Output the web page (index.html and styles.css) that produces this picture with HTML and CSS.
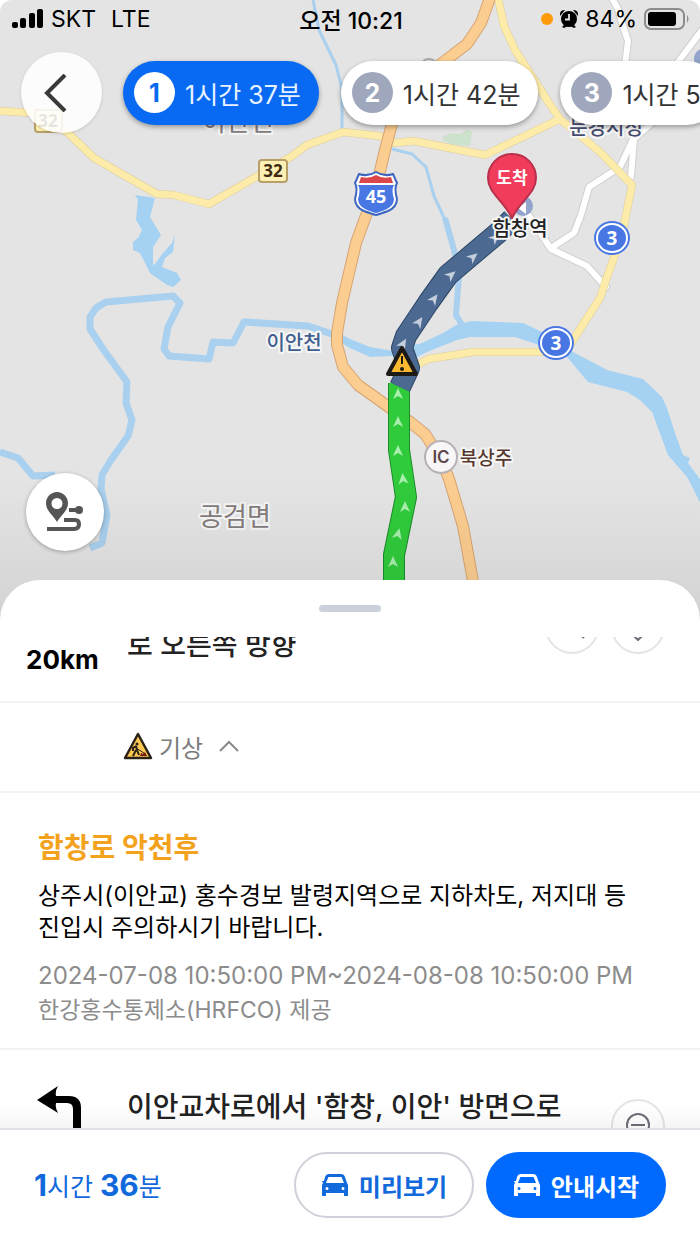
FILE: index.html
```html
<!DOCTYPE html>
<html lang="ko">
<head>
<meta charset="utf-8">
<meta name="viewport" content="width=device-width, initial-scale=1">
<title>길찾기</title>
<link rel="stylesheet" href="styles.css">
</head>
<body>
<div class="app">
  <section class="map">
    <svg class="map-canvas" viewBox="0 0 700 625" preserveAspectRatio="xMidYMin slice" role="img" aria-label="경로 지도">
      <defs>
        <path id="heading" d="M0-6 5 5 0 2-5 5Z"/>
        <linearGradient id="shade" x1="0" y1="0" x2="0" y2="1">
          <stop offset="0" stop-color="#000" stop-opacity="0"/>
          <stop offset="1" stop-color="#000" stop-opacity=".08"/>
        </linearGradient>
      </defs>

      <!-- park and water -->
      <path class="park" d="m443 136 9-3 8 1 8-5 4 3-2 14-15-1-12-4Z"/>
      <g class="water">
        <path d="M135 195 155 198 150 217 161 235 153 247 153 265 155 264 163 253 172 243 175 235 173 252 165 258 162 267 177 273 181 280 173 287 167 285 150 273 140 253 133 250 133 242 138 238 142 230 136 220 138 200Z"/>
        <path d="M335 331 350 339 370 347 393 351 422 343 443 333 458 324 472 321 523 323 540 331 573 352 607 370 643 379 662 397 667 408 675 433 683 455 690 458 688 463 702 482 702 506 687 477 668 455 652 412 640 400 627 392 588 382 567 357 545 347 515 337 470 337 457 340 427 352 417 357 392 356 370 357 350 348 335 339Z"/>
      </g>
      <g class="stream">
        <path class="w3" d="m313 0 6 30 17 35 6 24v45M392 149l20 5 14 13 8 29 12 26"/>
        <path class="w5" d="m445 218 9 32 5 25-3 40 8 13"/>
        <path class="w6" d="m0 452 18 6 15 18 22-1M90 548l12-5 5-28-6-26 1-14 9-15 17-24 4-16-6-17 1-21-24-33-13-20 0-12 6-9 10-6 67-6 7 7-12 24-4 22 5 7 40 3 4-17 20 1 11-21 64 4 24 8 8 4"/>
      </g>

      <!-- roads -->
      <path class="minor-case" d="m613 0 5 9 5 17 5 15-3 24M702 30l-24 32M653 122l-19 17-3 38M634 137l-14 30-31 20-8 28-7 18-23 15M527 213l24 36 36 17 19 21"/>
      <path class="minor" d="m613 0 5 9 5 17 5 15-3 24M702 30l-24 32M653 122l-19 17-3 38M634 137l-14 30-31 20-8 28-7 18-23 15M527 213l24 36 36 17 19 21"/>
      <path class="main-case" d="m0 111 35 2 32 19 27 26 63 36 17 1 35 9 80-46 18-13 36-13 37 4 12 7 22-2 71 14 75-36 40 33 32 33-6 30-4 20-15 42-7 21-34 53M498-2l6 28 11 24 34 53 11 16M556 352l-83 0-45 7-22 12"/>
      <path class="main" d="m0 111 35 2 32 19 27 26 63 36 17 1 35 9 80-46 18-13 36-13 37 4 12 7 22-2 71 14 75-36 40 33 32 33-6 30-4 20-15 42-7 21-34 53M498-2l6 28 11 24 34 53 11 16M556 352l-83 0-45 7-22 12"/>
      <path class="express-case" d="m490-2-9 25-14 21-43 33-27 28-12 45-9 38-20 55-14 60-5 30 0 12 6 22 15 18 35 25 17 12 15 12 16 25 8 20 14 47 17 94"/>
      <path class="express" d="m490-2-9 25-14 21-43 33-27 28-12 45-9 38-20 55-14 60-5 30 0 12 6 22 15 18 35 25 17 12 15 12 16 25 8 20 14 47 17 94"/>

      <!-- place names under the route -->
      <circle class="spot" cx="523" cy="206" r="10"/>
      <path class="spot-mark" d="m518 208 8-6v12Z"/>
      <circle class="spot" cx="705" cy="59" r="11"/>
      <circle class="spot-ring" cx="429" cy="68" r="9"/>
      <text class="label town" x="238" y="131">이안면</text>
      <text class="label town" x="235" y="526">공검면</text>
      <text class="label river" x="294" y="350">이안천</text>
      <text class="label office" x="606" y="135">문경시청</text>

      <!-- road numbers -->
      <g class="local-road">
        <rect x="35" y="110" width="27" height="22" rx="3"/><text x="48" y="127">32</text>
        <rect x="259" y="160" width="28" height="22" rx="3"/><text x="273" y="177">32</text>
      </g>
      <g class="national-road">
        <ellipse cx="612" cy="238" rx="18" ry="17"/><ellipse class="ring" cx="612" cy="238" rx="15" ry="14"/><text x="612" y="245">3</text>
        <ellipse cx="556" cy="343" rx="18" ry="17"/><ellipse class="ring" cx="556" cy="343" rx="15" ry="14"/><text x="556" y="350">3</text>
      </g>
      <g class="shield">
        <path class="shield-edge" d="M359 174q9 3 17-2 8 5 17 2l4 9q-3 5 0 16 0 8-9 12-8 3-12 4-4-1-12-4-9-4-9-12 3-11 0-16Z"/>
        <path class="shield-top" d="M361 177q9 2 15-2 6 4 15 2l2 6h-34Z"/>
        <path class="shield-body" d="M358 185h36q-3 5 0 14 0 6-7 10-7 3-11 4-4-1-11-4-7-4-7-10 3-9 0-14Z"/>
        <text x="376" y="203">45</text>
      </g>
      <circle class="ic" cx="441" cy="457" r="16"/>
      <text class="ic-text" x="441" y="463">IC</text>
      <text class="label gate" x="486" y="465">북상주</text>

      <!-- route -->
      <path class="route clear-case" d="M399 383v67l7 47-12 58v75"/>
      <path class="route clear" d="M399 383v67l7 47-12 58v75"/>
      <path class="route slow-case" d="m512 219-13 13-51 43-20 28-22 33-4 12 7 20-9 19"/>
      <path class="route slow" d="m512 219-13 13-51 43-20 28-22 33-4 12 7 20-9 19"/>
      <g class="arrows-clear">
        <use href="#heading" x="398" y="394"/><use href="#heading" x="398" y="422"/><use href="#heading" x="398" y="451"/>
        <use href="#heading" transform="translate(403 479) rotate(-6)"/><use href="#heading" x="405" y="507"/>
        <use href="#heading" transform="translate(398 534) rotate(14)"/><use href="#heading" x="393" y="562"/>
      </g>
      <g class="arrows-slow">
        <use href="#heading" transform="translate(495 238) rotate(48)"/><use href="#heading" transform="translate(473 257) rotate(50)"/>
        <use href="#heading" transform="translate(451 275) rotate(50)"/><use href="#heading" transform="translate(434 299) rotate(36)"/>
        <use href="#heading" transform="translate(419 322) rotate(34)"/><use href="#heading" transform="translate(403 344) rotate(30)"/>
      </g>
      <g class="hazard">
        <path class="hazard-edge" d="m402 348 14 26h-28Z"/>
        <path d="M402 356v8"/><circle cx="402" cy="369" r="1"/>
      </g>
      <path class="pin" d="M512 154c-14 0-24 11-24 24 0 15 15 22 24 40 9-18 24-25 24-40 0-13-10-24-24-24Z"/>
      <text class="pin-text" x="512" y="184">도착</text>
      <text class="label station" x="520" y="236">함창역</text>
      <rect x="0" y="480" width="700" height="145" fill="url(#shade)"/>
    </svg>

    <header class="status">
      <div class="status-side">
        <svg width="32" height="20" viewBox="0 0 32 20" aria-hidden="true"><rect x="0" y="13" width="6" height="6" rx="2"/><rect x="8" y="9" width="6" height="10" rx="2"/><rect x="17" y="4" width="6" height="15" rx="2"/><rect x="25" y="0" width="6" height="19" rx="2"/></svg>
        <span>SKT</span><span class="network">LTE</span>
      </div>
      <time class="clock">오전 10:21</time>
      <div class="status-side status-end">
        <svg width="12" height="12" viewBox="0 0 12 12" aria-hidden="true"><circle cx="6" cy="6" r="6" fill="#ff9a0a"/></svg>
        <svg width="18" height="20" viewBox="0 0 18 20" aria-hidden="true"><circle cx="9" cy="10" r="8"/><path d="M0 5q0-4 5-4L0 7ZM18 5q0-4-5-4l5 6ZM2 18l3-3 3 2-4 2ZM16 18l-3-3-3 2 4 2Z"/><path d="M9 5v5.500H5" fill="none" stroke="#e4e4e4" stroke-width="1.800"/></svg>
        <span>84%</span>
        <svg width="46" height="22" viewBox="0 0 46 22" aria-hidden="true"><rect x="1" y="1" width="39" height="20" rx="6" fill="none" stroke="#8c8c8c" stroke-width="2"/><rect x="4" y="4" width="28" height="14" rx="3"/><path d="M43 7q3 4 0 8Z" fill="#8c8c8c"/></svg>
      </div>
    </header>

    <nav class="routes">
      <button class="back" type="button" aria-label="뒤로">
        <svg width="24" height="38" viewBox="0 0 24 38" aria-hidden="true"><path d="M21 1 3 19l18 18" fill="none" stroke="#3a3a3a" stroke-width="4"/></svg>
      </button>
      <div class="chips">
        <button class="chip chip-on" type="button"><span class="chip-no">1</span>1시간 37분</button>
        <button class="chip" type="button"><span class="chip-no">2</span>1시간 42분</button>
        <button class="chip" type="button"><span class="chip-no">3</span>1시간 5</button>
      </div>
    </nav>

    <button class="overview" type="button" aria-label="전체 경로">
      <svg width="40" height="42" viewBox="0 0 40 42" aria-hidden="true">
        <path d="M12 1C6 1 1 6 1 12c0 8 7 12 11 19 4-7 11-11 11-19 0-6-5-11-11-11Zm0 6a5 5 0 1 1 0 11 5 5 0 0 1 0-11Z" fill="#555" fill-rule="evenodd"/>
        <circle cx="34" cy="19" r="4" fill="#555"/>
        <path d="M24 19h8M19 29h11q4 0 4 4 0 5-5 5H2" fill="none" stroke="#555" stroke-width="4"/>
      </svg>
    </button>
  </section>

  <main class="sheet">
    <div class="grip"><span class="handle"></span></div>
    <div class="scroller">
      <div class="steps">
        <section class="step step-past">
          <strong class="distance">20km</strong>
          <h2 class="step-title">로 오른쪽 방향</h2>
          <div class="step-tools">
            <button class="round" type="button" aria-label="지도에서 보기"><svg width="26" height="26" viewBox="0 0 26 26" aria-hidden="true"><circle cx="12" cy="12" r="8"/><path d="m18 18 7 6"/></svg></button>
            <button class="round" type="button" aria-label="펼치기"><svg width="26" height="28" viewBox="0 0 26 28" aria-hidden="true"><path d="m7 21 6 6 6-6"/></svg></button>
          </div>
        </section>

        <button class="toggle" type="button" aria-expanded="true">
          <svg width="30" height="28" viewBox="0 0 30 28" aria-hidden="true">
            <path d="M15 2 28 26H2Z" fill="#fbc850" stroke="#2a2118" stroke-width="2.500" stroke-linejoin="round"/>
            <circle cx="14" cy="12" r="1.500" fill="#2a2118"/>
            <path d="m13 14 1 4 2 5M13 14l-3 2v3M13 18l-1 2-2 4" fill="none" stroke="#2a2118" stroke-width="2"/>
            <path d="m13 16 8 5" stroke="#2a2118"/>
            <path d="m17 24 1-3 2 1 2-2 2 4Z" fill="#7a1d12"/>
          </svg>
          <span>기상</span>
          <svg class="caret" width="20" height="12" viewBox="0 0 20 12" aria-hidden="true"><path d="m1 11 9-9 9 9" fill="none" stroke="#8a8a8a" stroke-width="2"/></svg>
        </button>

        <article class="alert">
          <h3 class="alert-title">함창로 악천후</h3>
          <p class="alert-text">상주시(이안교) 홍수경보 발령지역으로 지하차도, 저지대 등 진입시 주의하시기 바랍니다.</p>
          <p class="alert-meta"><span>2024-07-08 10:50:00 PM~2024-08-08 10:50:00 PM</span><span class="source">한강홍수통제소(HRFCO) 제공</span></p>
        </article>

        <section class="step">
          <svg class="turn" width="52" height="56" viewBox="0 0 52 56" role="img" aria-label="좌회전"><path d="M0 14 21 0q-3 5-2 10h13q12 0 12 12v34h-8V23q0-6-6-6H19q-1 5 2 10Z"/></svg>
          <h2 class="step-title">이안교차로에서 '함창, 이안' 방면으로</h2>
          <div class="step-tools">
            <button class="round" type="button" aria-label="지도에서 보기"><svg width="26" height="26" viewBox="0 0 26 26" aria-hidden="true"><circle cx="13" cy="12" r="11"/><path d="M6 12h14"/></svg></button>
          </div>
        </section>
      </div>
    </div>
  </main>

  <footer class="bar">
    <p class="total"><b>1</b>시간 <b>36</b>분</p>
    <button class="action" type="button">
      <svg width="28" height="22" viewBox="0 0 28 22" aria-hidden="true"><path fill-rule="evenodd" d="M8 0h12q3 0 4 3l2 6 1 2v11h-4v-3H5v3H1V11l1-2-1-2h2l1-4q1-3 4-3Zm0 3q-1 0-1 1L5 9h18l-2-5q0-1-1-1ZM6 13a1.500 1.500 0 1 0 0 3 1.500 1.500 0 0 0 0-3Zm16 0a1.500 1.500 0 1 0 0 3 1.500 1.500 0 0 0 0-3Z"/></svg>
      미리보기
    </button>
    <button class="action action-go" type="button">
      <svg width="28" height="22" viewBox="0 0 28 22" aria-hidden="true"><path fill-rule="evenodd" d="M8 0h12q3 0 4 3l2 6 1 2v11h-4v-3H5v3H1V11l1-2-1-2h2l1-4q1-3 4-3Zm0 3q-1 0-1 1L5 9h18l-2-5q0-1-1-1ZM6 13a1.500 1.500 0 1 0 0 3 1.500 1.500 0 0 0 0-3Zm16 0a1.500 1.500 0 1 0 0 3 1.500 1.500 0 0 0 0-3Z"/></svg>
      안내시작
    </button>
  </footer>
</div>
</body>
</html>
```

FILE: styles.css
```css
* { box-sizing: border-box; }
body, h2, h3, p { margin: 0; }
body {
  background: #fff;
  color: #000;
  font-family: Inter, "Noto Sans CJK KR", sans-serif;
}
button {
  border: 0;
  padding: 0;
  background: none;
  color: inherit;
  font: inherit;
  cursor: pointer;
}
svg { display: block; flex: none; }

.app {
  display: flex;
  flex-direction: column;
  height: 100vh;
  overflow: hidden;
  border-radius: 12px 12px 0 0;
}

/* map */
.map {
  position: relative;
  display: flex;
  flex-direction: column;
  flex: 580 1 0;
  min-height: 0;
}
.map-canvas {
  position: absolute;
  inset: 0;
  z-index: -1;
  width: 100%;
  height: calc(100% + 45px);
  background: #e4e4e4;
}
.park { fill: #cde2cc; }
.water { fill: #a5d2f3; }
.stream { fill: none; stroke: #a9d0ee; stroke-linejoin: round; }
.w3 { stroke-width: 3px; }
.w5 { stroke-width: 6px; }
.w6 { stroke-width: 7px; }
.minor, .minor-case, .main, .main-case, .express, .express-case {
  fill: none;
  stroke-linejoin: round;
  stroke-linecap: round;
}
.minor { stroke: #fff; stroke-width: 6px; }
.minor-case { stroke: #cfcfcf; stroke-width: 8px; }
.main { stroke: #fdeba9; stroke-width: 7px; }
.main-case { stroke: #dccb9c; stroke-width: 8px; }
.express { stroke: #fbcd90; stroke-width: 10px; }
.express-case { stroke: #d6a473; stroke-width: 12px; }
.spot { fill: #93a4cd; }
.spot-mark { fill: #fff; }
.spot-ring { fill: #e4e4e4; stroke: #a8a8a8; stroke-width: 2px; }

.label {
  text-anchor: middle;
  paint-order: stroke;
  stroke: #f6f6f6;
  stroke-width: 4px;
  stroke-linejoin: round;
  font-weight: 500;
}
.town { font-size: 26px; font-weight: 400; fill: #837c7c; }
.river { font-size: 20px; fill: #3f5f8f; }
.office { font-size: 20px; fill: #474c6e; }
.station { font-size: 20px; fill: #222; }
.gate { font-size: 19px; fill: #56392f; }

.local-road { text-anchor: middle; font: 700 17px "Noto Sans", sans-serif; fill: #3d2a10; }
.local-road rect { fill: #fdf0b4; stroke: #b89f68; stroke-width: 2px; }
.national-road { text-anchor: middle; font: 700 19px "Noto Sans", sans-serif; fill: #4877e4; }
.national-road text { fill: #fff; }
.ring { stroke: #fff; stroke-width: 2px; }
.shield { text-anchor: middle; font: 700 18px "Noto Sans", sans-serif; fill: #fff; }
.shield-edge { stroke: #3d67c0; stroke-width: 2px; }
.shield-top { fill: #d9474a; }
.shield-body { fill: #4877e4; }
.ic { fill: #f8f6f7; stroke: #b8b2b5; stroke-width: 2px; }
.ic-text { text-anchor: middle; font-size: 17px; font-weight: 600; fill: #5b474b; }

.route { fill: none; stroke-linejoin: round; }
.clear { stroke: #30cb3b; stroke-width: 20px; }
.clear-case { stroke: #1d8b2a; stroke-width: 22px; }
.slow { stroke: #4b6991; stroke-width: 20px; }
.slow-case { stroke: #2f4766; stroke-width: 22px; }
.arrows-clear { fill: #a8efad; }
.arrows-slow { fill: #c3cddb; }
.hazard { fill: #1c1a17; stroke: #1c1a17; stroke-width: 2px; }
.hazard-edge { fill: #fbb930; stroke-width: 4px; stroke-linejoin: round; }
.pin { fill: #f23c5b; stroke: #b9304d; stroke-width: 2px; }
.pin-text { text-anchor: middle; font-size: 17px; font-weight: 700; fill: #fff; }

/* status bar */
.status {
  display: grid;
  grid-template-columns: 1fr auto 1fr;
  align-items: center;
  height: 38px;
  padding: 0 10px 0 12px;
  font-size: 23px;
}
.status-side { display: flex; align-items: center; gap: 7px; }
.status-end { justify-content: flex-end; }
.network { margin-left: 8px; }
.clock { font-weight: 500; }

/* route choices */
.routes {
  display: flex;
  align-items: center;
  gap: 21px;
  margin-top: 14px;
  padding-left: 21px;
}
.back, .overview {
  display: grid;
  flex: none;
  place-items: center;
  border-radius: 50%;
  background: #fff;
  box-shadow: 0 1px 4px rgba(0, 0, 0, .3);
}
.back {
  width: 81px;
  height: 81px;
  padding-right: 12px;
  background: rgba(255, 255, 255, .88);
  box-shadow: 0 1px 3px rgba(0, 0, 0, .15);
}
.chips { display: flex; gap: 22px; }
.chip {
  display: flex;
  flex: none;
  align-items: center;
  gap: 10px;
  height: 64px;
  padding: 0 18px 0 11px;
  border-radius: 32px;
  background: #fff;
  box-shadow: 0 2px 5px rgba(0, 0, 0, .35);
  color: #333;
  font-size: 25px;
}
.chip-no {
  display: grid;
  place-items: center;
  width: 41px;
  height: 41px;
  border-radius: 50%;
  background: #9fa7bc;
  color: #fff;
  font-weight: 700;
}
.chip-on { background: #086af3; color: #e9f3ff; }
.chip-on .chip-no { background: #fff; color: #086af3; }
.overview {
  width: 78px;
  height: 78px;
  margin: auto 0 29px 26px;
}

/* step list */
.sheet {
  display: flex;
  position: relative;
  flex-direction: column;
  flex: 548 1 0;
  min-height: 0;
  border-radius: 40px 40px 0 0;
  background: #fff;
}
.grip { display: flex; justify-content: center; padding: 25px 0; }
.handle { width: 62px; height: 7px; border-radius: 4px; background: #cbd1db; }
.scroller {
  position: relative;
  flex: 1;
  min-height: 0;
  overflow: hidden;
}
.scroller::after {
  content: "";
  position: absolute;
  inset: auto 0 0;
  height: 24px;
  background: linear-gradient(rgba(0, 0, 0, 0), rgba(0, 0, 0, .04));
}
.steps { margin-top: -47px; }
.step {
  display: grid;
  grid-template-columns: 73px 1fr auto;
  column-gap: 28px;
  align-items: start;
  padding: 36px 35px 36px 26px;
}
.step-past {
  align-items: end;
  padding-top: 10px;
  padding-bottom: 22px;
  border-bottom: 2px solid #f2f2f4;
}
.distance { font-size: 26px; line-height: 38px; }
.step-title {
  color: #222;
  font-size: 28px;
  font-weight: 500;
  line-height: 42px;
}
.step-past .step-title { padding-bottom: 13px; }
.turn { justify-self: center; }
.step-tools { display: flex; gap: 12px; padding-top: 13px; }
.step-past .step-tools { padding: 0 0 25px; }
.round {
  display: grid;
  place-items: center;
  width: 54px;
  height: 54px;
  border: 2px solid #e4e4e6;
  border-radius: 50%;
}
.round svg { fill: none; stroke: #6d6f78; stroke-width: 2px; }

.toggle {
  display: flex;
  align-items: center;
  gap: 6px;
  width: 100%;
  height: 90px;
  padding: 0 0 2px 123px;
  border-bottom: 2px solid #f4f4f6;
  color: #7c7c7c;
  font-size: 24px;
}
.caret { margin-left: 10px; }

.alert { padding: 35px 38px 20px; border-bottom: 2px solid #f2f2f4; }
.alert-title { color: #f3a21d; font-size: 28px; line-height: 40px; }
.alert-text {
  margin-top: 12px;
  font-size: 24px;
  line-height: 32px;
  word-break: keep-all;
}
.alert-meta {
  display: grid;
  margin-top: 14px;
  color: #8c8c8c;
  font-size: 24px;
  line-height: 35px;
}
.source { font-size: 23px; }

/* bottom bar */
.bar {
  display: flex;
  flex: none;
  align-items: center;
  gap: 12px;
  padding: 22px 34px 27px;
  border-top: 2px solid #dfe0e8;
  background: #fff;
}
.total { margin-right: auto; color: #1169dc; font-size: 25px; }
.total b { font-size: 30px; }
.action {
  display: flex;
  align-items: center;
  justify-content: center;
  gap: 10px;
  width: 180px;
  height: 66px;
  border: 2px solid #d0d0da;
  border-radius: 33px;
  color: #1169dc;
  font-size: 24px;
  font-weight: 700;
}
.action svg { fill: currentColor; }
.action-go { border-color: #006aff; background: #006aff; color: #fff; }
```
